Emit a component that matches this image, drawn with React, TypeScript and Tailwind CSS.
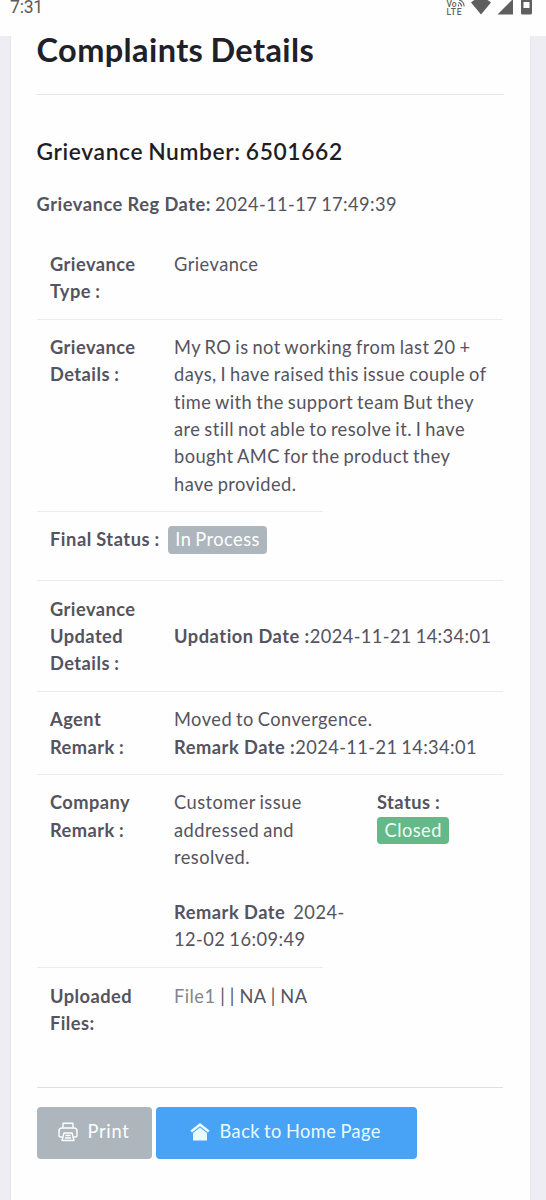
import type { ReactNode } from 'react'

const detailLines = [
  'My RO is not working from last 20 +',
  'days, I have raised this issue couple of',
  'time with the support team But they',
  'are still not able to resolve it. I have',
  'bought AMC for the product they',
  'have provided.',
]

function StatusBar() {
  return (
    <header className="flex h-9 shrink-0 items-start justify-between bg-[#fefefe] pl-2.5 text-[#5a5a5a]">
      <span className="font-['Roboto'] text-[17.500px] leading-[15px] tracking-[-0.2px]">7:31</span>
      <svg width="100" height="18" viewBox="0 0 100 18" fill="#5f5f5f">
        <text x="0.5" y="6.5" fontFamily="Roboto, sans-serif" fontSize="8.5" fontWeight="500" letterSpacing="0">Vo</text>
        <text x="0.5" y="14.5" fontFamily="Roboto, sans-serif" fontSize="8.5" fontWeight="500" letterSpacing="0" textLength="15">LTE</text>
        <path d="M12.500 6.500V4.500M12.500 2.500a4 4 0 0 1 3 4M13 0a6 6 0 0 1 5 6.500" fill="none" stroke="#5f5f5f" strokeWidth="1.1" />
        <path d="M25 2.500Q35-6 45 2.500L35 14.500Z" />
        <path d="M51.500 14.500L67-1V14.500Z" />
        <path fillRule="evenodd" d="M75-1H86V13a1.500 1.500 0 0 1-1.500 1.500H76.500A1.500 1.500 0 0 1 75 13ZM77.500 2V8H83.500V2Z" />
      </svg>
    </header>
  )
}

function Row({ label, children, short }: { label: ReactNode; children: ReactNode; short?: boolean }) {
  return (
    <div>
      <div className="flex px-[13.500px] pt-[14.100px] pb-[13.300px]">
        <div className="w-[124px] shrink-0 font-bold [word-spacing:-0.600px]">{label}</div>
        <div className="min-w-0 flex-1 whitespace-nowrap">{children}</div>
      </div>
      <div className={short ? 'h-px w-[286px] bg-[#ececee]' : 'h-px bg-[#ececee]'} />
    </div>
  )
}

function Strong({ children }: { children: ReactNode }) {
  return <strong className="tracking-[0.550px] [word-spacing:-0.300px]">{children}</strong>
}

function PrinterIcon() {
  return (
    <svg width="20" height="20" viewBox="0 0 20 20" fill="none" stroke="currentColor" strokeWidth="1.400" strokeLinejoin="round">
      <path d="M5 6V1.200H15V6" />
      <path d="M4.500 15H2.500Q1 15 1 13.500V9Q1 6 4 6H16Q19 6 19 9V13.500Q19 15 17.500 15H15.500" />
      <path d="M6 11H14L16 18.500H4ZM7.500 13.500H12.500M7 16H13" />
    </svg>
  )
}

function HomeIcon() {
  return (
    <svg width="20" height="19" viewBox="0 0 20 19" fill="currentColor">
      <path d="M10 0L19.500 7.400L18.100 9.600L10 3.300L1.900 9.600L0.500 7.400Z" />
      <path d="M10 4.500L17 10V17.500H3V10Z" />
    </svg>
  )
}

export default function App() {
  return (
    <div className="flex h-[1200px] w-[546px] flex-col overflow-hidden bg-[#ededf3] font-['Lato',sans-serif] text-[18.250px] leading-[27.400px] tracking-[0.460px] text-[#55535f] [word-spacing:-1.200px]">
      <StatusBar />
      <main className="mr-[15px] ml-[10px] flex-1 border-x border-[#e6e6eb] bg-[#fefefe] pr-[26px] pl-[25.500px]">
        <h1 className="h-[58px] text-[32.500px] leading-[27px] font-bold tracking-[0.400px] text-[#20202b]">Complaints Details</h1>
        <div className="h-px bg-[#e6e6e9]" />
        <h2 className="mt-[40px] text-[22.800px] leading-8 font-semibold tracking-[0.620px] whitespace-nowrap text-[#1e1e24]">
          Grievance Number: 6501662
        </h2>
        <p className="mt-[24px] whitespace-nowrap">
          <Strong>Grievance Reg Date:</Strong> <span className="tracking-[0.400px]">2024-11-17 17:49:39</span>
        </p>

        <section className="mt-[18px] mr-px">
          <Row label={<>Grievance<br />Type :</>}>Grievance</Row>
          <Row label={<>Grievance<br />Details :</>} short>
            {detailLines.map(line => (
              <div key={line}>{line}</div>
            ))}
          </Row>
          <div>
            <div className="flex h-[68px] items-start gap-[8px] px-[13.500px] pt-[13.800px]">
              <strong className="tracking-[0.550px] whitespace-nowrap [word-spacing:-0.600px]">Final Status :</strong>
              <span className="rounded-[4px] bg-[#adb5bd] px-[7.500px] text-white">In Process</span>
            </div>
            <div className="h-px bg-[#ececee]" />
          </div>
          <Row label={<>Grievance<br />Updated<br />Details :</>}>
            <div className="pt-[27.400px]">
              <Strong>Updation Date :</Strong><span className="tracking-[0.380px]">2024-11-21 14:34:01</span>
            </div>
          </Row>
          <Row label={<>Agent<br />Remark :</>}>
            <div>Moved to Convergence.</div>
            <Strong>Remark Date :</Strong><span className="tracking-[0.380px]">2024-11-21 14:34:01</span>
          </Row>
          <Row label={<>Company<br />Remark :</>} short>
            <div className="flex">
              <div className="w-[203px]">
                Customer issue<br />addressed and<br />resolved.<br /><br />
                <Strong>Remark Date</Strong>&nbsp; 2024-<br />12-02 16:09:49
              </div>
              <div>
                <strong className="block [word-spacing:-0.400px]">Status :</strong>
                <span className="inline-block rounded-[4px] bg-[#65b888] px-[7.500px] text-[#f0fff5]">Closed</span>
              </div>
            </div>
          </Row>
          <div className="flex h-[118.500px] px-[13.500px] pt-[14.500px]">
            <div className="w-[124px] font-bold">Uploaded<br />Files:</div>
            <div className="[word-spacing:-0.500px]"><span className="text-[#85858d]">File1</span> | | NA | NA</div>
          </div>
        </section>

        <div className="mr-px h-px bg-[#dfdfe3]" />
        <div className="mt-[19px] flex gap-1">
          <button className="flex h-[52px] w-[115px] items-center gap-2.5 rounded-[4px] bg-[#adb5bd] pb-px pl-[21px] text-white">
            <PrinterIcon />
            <span className="tracking-[0.700px]">Print</span>
          </button>
          <button className="flex h-[52px] w-[261px] items-center gap-2.5 rounded-[4px] bg-[#48a3f7] pb-px pl-[34px] whitespace-nowrap text-[#e8fbff] [word-spacing:-1.100px]">
            <HomeIcon />
            <span>Back to Home Page</span>
          </button>
        </div>
      </main>
    </div>
  )
}
